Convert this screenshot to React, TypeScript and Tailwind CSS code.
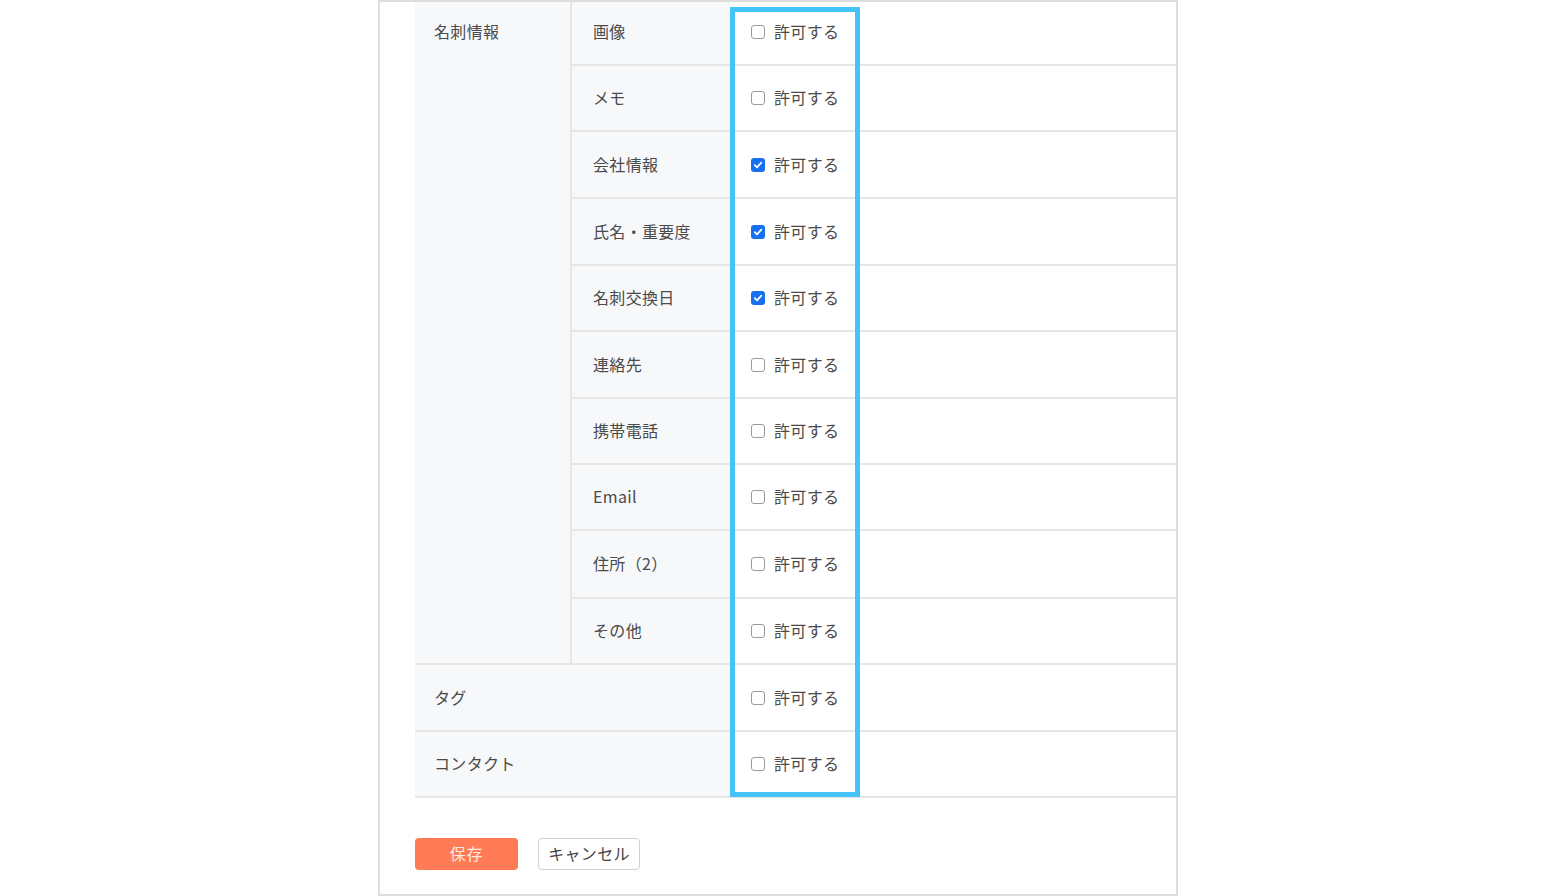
import React from "react";

const rows: { label: string; checked: boolean; h: number }[] = [
  { label: "画像", checked: false, h: 64 },
  { label: "メモ", checked: false, h: 66 },
  { label: "会社情報", checked: true, h: 67 },
  { label: "氏名・重要度", checked: true, h: 67 },
  { label: "名刺交換日", checked: true, h: 66 },
  { label: "連絡先", checked: false, h: 67 },
  { label: "携帯電話", checked: false, h: 66 },
  { label: "Email", checked: false, h: 66 },
  { label: "住所（2）", checked: false, h: 68 },
  { label: "その他", checked: false, h: 66 },
];

const extra: { label: string; h: number }[] = [
  { label: "タグ", h: 67 },
  { label: "コンタクト", h: 66 },
];

function Check({ checked }: { checked: boolean }) {
  if (checked) {
    return (
      <span className="flex h-[14px] w-[14px] items-center justify-center rounded-[3px] bg-[#1670f0]">
        <svg width="10" height="10" viewBox="0 0 10 10" fill="none">
          <path d="M1.8 5.2 L4 7.4 L8.3 2.6" stroke="white" strokeWidth="1.8" strokeLinecap="round" strokeLinejoin="round" />
        </svg>
      </span>
    );
  }
  return <span className="h-[14px] w-[14px] rounded-[3px] border border-[#9a9a9a] bg-white" />;
}

function Allow({ checked, first }: { checked: boolean; first?: boolean }) {
  return (
    <div className={`flex h-full items-center pl-[21px] ${first ? "pb-[3px]" : ""}`}>
      <Check checked={checked} />
      <span className="ml-[9px] -translate-y-[1px] tracking-[0.02em]">許可する</span>
    </div>
  );
}

export default function App() {
  return (
    <div
      className="flex h-[896px] w-full justify-center bg-white text-[16px] text-[#4a4a4a]"
      style={{ fontFamily: '"Noto Sans CJK JP", "Noto Sans", sans-serif' }}
    >
      <div className="flex h-[896px] w-[800px] flex-col border-2 border-[#dedede] pl-[35px]">
        <div className="relative">
          <div className="flex border-b-2 border-[#e6e6e6]">
            <div className="w-[157px] border-r-2 border-[#e6e6e6] bg-[#f7f8fa]">
              <div className="flex h-[60px] items-center pl-[19px] tracking-[0.02em]">
                <span className="-translate-y-[1px]">名刺情報</span>
              </div>
            </div>
            <div className="flex flex-1 flex-col">
              {rows.map((r, i) => (
                <div
                  key={r.label}
                  className={`grid grid-cols-[158px_130px_1fr] ${i < rows.length - 1 ? "border-b-2 border-[#e6e6e6]" : ""}`}
                  style={{ height: i < rows.length - 1 ? r.h : r.h - 2 }}
                >
                  <div className={`flex items-center bg-[#f7f8fa] pl-[21px] tracking-[0.02em] ${i === 0 ? "pb-[3px]" : ""}`}>
                    <span className="-translate-y-[1px]">{r.label}</span>
                  </div>
                  <div className="bg-white">
                    <Allow checked={r.checked} first={i === 0} />
                  </div>
                  <div className="bg-white" />
                </div>
              ))}
            </div>
          </div>
          {extra.map((r) => (
            <div
              key={r.label}
              className="grid grid-cols-[315px_130px_1fr] border-b-2 border-[#e6e6e6]"
              style={{ height: r.h }}
            >
              <div className="flex items-center bg-[#f7f8fa] pl-[19px] tracking-[0.02em]">
                <span className="-translate-y-[1px]">{r.label}</span>
              </div>
              <div className="bg-white">
                <Allow checked={false} />
              </div>
              <div className="bg-white" />
            </div>
          ))}
          <div className="pointer-events-none absolute left-[315px] top-[5px] h-[790px] w-[130px] border-[5px] border-[#45c4fa]" />
        </div>
        <div className="mt-[40px] flex gap-[20px]">
          <button className="flex h-[32px] w-[103px] items-center justify-center rounded-[4px] bg-[#ff7b55] text-[16px] text-[#ffe9e2] tracking-[0.05em]">
            <span className="-translate-y-[1px]">保存</span>
          </button>
          <button className="flex h-[32px] w-[102px] items-center justify-center rounded-[4px] border-[1.5px] border-[#cfcfcf] bg-white text-[16px] text-[#444] tracking-[0.02em]">
            <span className="-translate-y-[1px]">キャンセル</span>
          </button>
        </div>
      </div>
    </div>
  );
}
